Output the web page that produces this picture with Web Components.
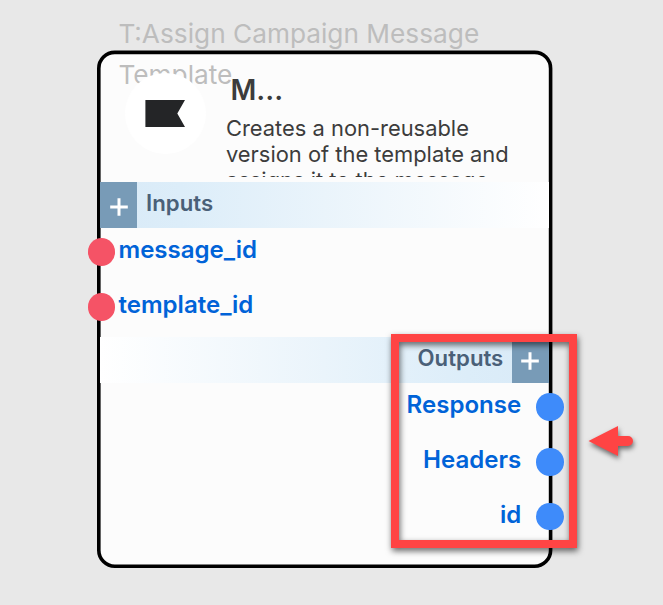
<!DOCTYPE html>
<html lang="en">
<head>
<meta charset="utf-8">
<title>Flow node</title>
<style>
html,body{margin:0;height:100%;overflow:hidden}
body{background:#e8e8e8;font-family:Inter,"Liberation Sans",sans-serif}
</style>
</head>
<body>
<flow-canvas>
  <flow-node caption="T:Assign Campaign Message Template">
    <node-header slot="header" heading="M...">Creates a non-reusable version of the template and assigns it to the message</node-header>
    <port-section side="left" label="Inputs">
      <port-row side="left">message_id</port-row>
      <port-row side="left">template_id</port-row>
    </port-section>
    <port-section side="right" label="Outputs">
      <port-row side="right">Response</port-row>
      <port-row side="right">Headers</port-row>
      <port-row side="right">id</port-row>
    </port-section>
  </flow-node>
  <callout-frame slot="overlay"></callout-frame>
  <callout-arrow slot="overlay"></callout-arrow>
</flow-canvas>
<script>
class Base extends HTMLElement {
  constructor() {
    super();
    this.attachShadow({mode: "open"});
  }
  connectedCallback() { this.shadowRoot.innerHTML = this.view(); }
  attr(name) { return this.getAttribute(name) || ""; }
}

customElements.define("flow-canvas", class extends Base {
  view() { return `<style>
    :host{display:block;position:relative;width:663px;height:605px;overflow:hidden;background:#e8e8e8}
    </style><slot></slot><slot name="overlay"></slot>`; }
});

customElements.define("flow-node", class extends Base {
  view() { return `<style>
    :host{display:block;position:absolute;left:97px;top:50px;width:456px;height:519px}
    svg{position:absolute;left:0;top:0}
    .caption{position:absolute;left:21.4px;top:-37.5px;width:400px;font-size:26.25px;line-height:41px;color:#bdbdbd}
    .body{position:relative;display:flex;flex-direction:column;padding:4.4px 4px 0 3.4px}
    </style>
    <svg width="456" height="519" aria-hidden="true"><rect x="1.8" y="2.4" width="451.8" height="513.8" rx="16" fill="#fcfcfc" stroke="#000" stroke-width="3.6"/></svg>
    <div class="caption">${this.attr("caption")}</div>
    <div class="body"><slot name="header"></slot><slot></slot></div>`; }
});

customElements.define("node-header", class extends Base {
  view() { return `<style>
    :host{display:flex;height:127.6px;box-sizing:border-box;padding:18.6px 0 0 24.2px;color:#3c3c3c}
    .avatar{flex:none;width:81.5px;height:81.5px;border-radius:50%;background:#fff;display:grid;place-items:center}
    .text{margin-left:19.9px;width:300px}
    h2{margin:0 0 0 4.5px;font-size:28px;line-height:34px;font-weight:600}
    p{margin:8.5px 0 0;height:62px;overflow:hidden;font-size:21.9px;line-height:26px}
    </style>
    <div class="avatar"><svg width="41" height="27" viewBox="0 0 41 27"><path d="M.4 0H40L32.3 13.5L40 27H.4Z" fill="#242527"/></svg></div>
    <div class="text"><h2>${this.attr("heading")}</h2><p><slot></slot></p></div>`; }
});

customElements.define("port-section", class extends Base {
  view() {
    const right = this.attr("side") === "right";
    return `<style>
    :host{display:block}
    .bar{display:flex;flex-direction:${right ? "row-reverse" : "row"};height:45.6px;
      background:linear-gradient(to ${right ? "left" : "right"},#d9eaf7 0%,#dcedf9 18%,#eaf4fb 50%,#fff 100%)}
    .add{width:36.7px;background:#789bb7;display:grid;place-items:center}
    .add svg{margin-top:${right ? "1.4px" : "3.5px"};margin-right:${right ? "1px" : "0"}}
    .label{padding:0 9px;font-size:22.2px;font-weight:600;line-height:42px;color:#4a6078}
    </style>
    <div class="bar"><div class="add"><svg width="18" height="18" viewBox="0 0 18 18"><path d="M9 .3V17.7M.2 9H17.8" stroke="#fff" stroke-width="3"/></svg></div><div class="label">${this.attr("label")}</div></div>
    <slot></slot>`;
  }
});

customElements.define("port-row", class extends Base {
  view() {
    const right = this.attr("side") === "right";
    return `<style>
    :host{display:flex;align-items:flex-start;flex-direction:${right ? "row-reverse" : "row"};height:54.75px;
      margin-${right ? "right" : "left"}:${right ? "-14.5px" : "-12.8px"}}
    i{flex:none;width:27.5px;height:27.5px;margin-top:10.8px;border-radius:50%;background:${right ? "#3e8bfa" : "#f55366"}}
    span{margin-${right ? "right:14.8px" : "left:3.4px"};font-size:24.05px;line-height:45.2px;font-weight:600;color:#0063d8}
    :host(:first-child) span{margin-top:-1px}
    </style><i></i><span><slot></slot></span>`;
  }
});

customElements.define("callout-frame", class extends Base {
  view() { return `<style>
    :host{display:block;position:absolute;left:391px;top:334px;width:170px;height:198px;border:8px solid #ff4444;filter:drop-shadow(1px 3px 3px rgba(0,0,0,.6))}
    </style>`; }
});

customElements.define("callout-arrow", class extends Base {
  view() { return `<style>
    :host{display:block;position:absolute;left:588px;top:425px;width:46px;height:32px;filter:drop-shadow(1px 3px 2.5px rgba(0,0,0,.55))}
    svg{display:block}
    </style><svg width="46" height="32"><path d="M0.5 16L30 1V11H40A5 5 0 0 1 40 21H30V31Z" fill="#ff4444"/></svg>`; }
});
</script>
</body>
</html>
